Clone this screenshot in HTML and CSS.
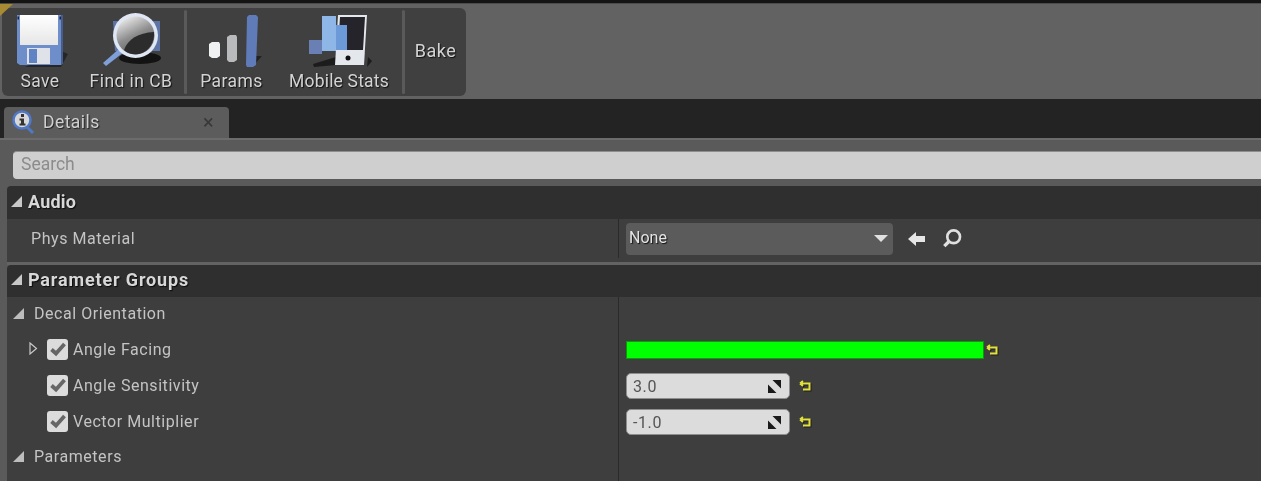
FILE: index.html
```html
<!DOCTYPE html>
<html lang="en">
<head>
  <meta charset="UTF-8">
  <title>Material Instance Details</title>
  <link rel="stylesheet" href="styles.css">
</head>
<body>
  <div class="toolbar-area">
    <span class="corner"></span>
    <div class="toolbar">
      <div class="tool tool-save">
        <svg width="50" height="54" viewBox="0 0 50 54">
          <defs>
            <linearGradient id="saveLabel" x1="0" y1="0" x2="0" y2="1">
              <stop offset="0" stop-color="#ffffff"/>
              <stop offset="1" stop-color="#e6e6e6"/>
            </linearGradient>
          </defs>
          <path d="M46 38l7 3-7 13H10z" fill="#262626"/>
          <path d="M2 2h46v48l-2 2H5l-3-2z" fill="#6d8ecb"/>
          <path d="M46 2h2v48l-2 2z" fill="#465c8a"/>
          <rect x="5" y="2" width="38" height="30" fill="url(#saveLabel)"/>
          <rect x="12" y="35" width="23" height="16" fill="#dfe2e8"/>
          <rect x="14" y="36" width="8" height="14" fill="#5f83c4"/>
          <rect x="2.500" y="3.500" width="1.500" height="3" fill="#223"/>
          <rect x="44.500" y="3.500" width="1.500" height="3" fill="#223"/>
        </svg>
        <span>Save</span>
      </div>
      <div class="tool tool-find">
        <svg width="62" height="56" viewBox="0 0 62 56">
          <defs>
            <linearGradient id="lens" x1="0.200" y1="0" x2="0.700" y2="1">
              <stop offset="0" stop-color="#f0f0f0"/>
              <stop offset="0.500" stop-color="#8d8d8d"/>
              <stop offset="1" stop-color="#555555"/>
            </linearGradient>
          </defs>
          <path d="M13 10h47v30H15z" fill="#5d74a4"/>
          <ellipse cx="40" cy="47" rx="21" ry="6" fill="#131313"/>
          <path d="M3 52l17-15 4 4L6 55z" fill="#7f9fd8"/>
          <circle cx="35.500" cy="24.500" r="22.500" fill="#dfe6f4"/>
          <circle cx="35.500" cy="24.500" r="19" fill="url(#lens)"/>
          <path d="M24 39c4-11 14-17 30-18 1 9-5 20-15 22-6 1-11 0-15-4z" fill="#2c2c2c"/>
        </svg>
        <span>Find in CB</span>
      </div>
      <span class="tool-sep"></span>
      <div class="tool tool-params">
        <svg width="56" height="54" viewBox="0 0 56 54">
          <path d="M50 43h7l-10 11h-5z" fill="#222"/>
          <path d="M4 31l3-2h7l1 2v12l-3 2H7l-3-2z" fill="#eef0f2"/>
          <path d="M22 24l3-2h6l1 2v23l-3 2h-5l-2-2z" fill="#b9babb"/>
          <path d="M42 4l2-2h7l2 2-2 48-3 2h-6l-1-2z" fill="#5f7cb8"/>
        </svg>
        <span>Params</span>
      </div>
      <div class="tool tool-mobile">
        <svg width="62" height="54" viewBox="0 0 62 54">
          <path d="M4 51l23-7v8l-22 2z" fill="#1c1c1c"/>
          <path d="M59 44l4 4-5 6z" fill="#1c1c1c"/>
          <rect y="27" width="13" height="14" fill="#6a80b4"/>
          <rect x="13" y="3" width="14" height="35" fill="#8eb6e6"/>
          <path d="M29 2h29l-3 50H26z" fill="#e4e7ec"/>
          <path d="M31 4h25l-2 33H29z" fill="#24242a"/>
          <rect x="27" y="12" width="11" height="25" fill="#6c9ad8"/>
          <circle cx="39" cy="45" r="2.500" fill="#111"/>
        </svg>
        <span>Mobile Stats</span>
      </div>
      <span class="tool-sep"></span>
      <div class="tool tool-bake"><span>Bake</span></div>
    </div>
  </div>

  <div class="tab-strip">
    <div class="tab">
      <svg class="tab-icon" width="24" height="26" viewBox="0 0 24 26">
        <path d="M15 17l7 7" stroke="#4f78c8" stroke-width="3"/>
        <circle cx="11" cy="11" r="8.500" fill="#d8d8d8" stroke="#4f78c8" stroke-width="2.500"/>
        <rect x="10" y="5" width="3" height="3" fill="#333"/>
        <path d="M8.500 9.500h4.500v5h1.500v2h-6v-2h1.500v-3h-1.500z" fill="#333"/>
      </svg>
      <span class="tab-label">Details</span>
      <span class="tab-close">×</span>
    </div>
  </div>

  <div class="panel">
    <div class="search-wrap">
      <div class="search">Search</div>
    </div>

    <div class="section-head">
      <span class="arrow-down"></span>Audio
    </div>
    <div class="row row-phys">
      <div class="name"><span class="label label-phys">Phys Material</span></div>
      <div class="value">
        <div class="combo">
          <span class="combo-text">None</span>
          <span class="combo-arrow"></span>
        </div>
        <svg class="use-icon" width="20" height="18" viewBox="0 0 20 18">
          <path d="M1 9l8-7v4h9v6H9v4z" fill="#e6e6e6"/>
        </svg>
        <svg class="browse-icon" width="20" height="20" viewBox="0 0 20 20">
          <circle cx="11.500" cy="8" r="5.800" fill="none" stroke="#e0e0e0" stroke-width="2.400"/>
          <path d="M7 12.500l-4 4" stroke="#e0e0e0" stroke-width="3"/>
        </svg>
      </div>
    </div>

    <div class="section-gap"></div>
    <div class="section-head head-params">
      <span class="arrow-down"></span>Parameter Groups
    </div>
    <div class="params">
      <div class="row row-group">
        <div class="name"><span class="arrow-small"></span><span class="label">Decal Orientation</span></div>
        <div class="value"></div>
      </div>
      <div class="row row-param row-facing">
        <div class="name indent">
          <svg class="expander" width="9" height="13" viewBox="0 0 9 13"><path d="M1 1l6.500 5.500L1 12z" fill="none" stroke="#c8c8c8" stroke-width="1.200"/></svg>
          <span class="check"><svg width="20" height="20" viewBox="0 0 20 20"><path d="M3.500 10.500l4.500 4 8.500-9.500" fill="none" stroke="#666" stroke-width="3.800"/></svg></span>
          <span class="label">Angle Facing</span>
        </div>
        <div class="value">
          <div class="color-bar"></div>
          <svg class="reset" width="13" height="12" viewBox="0 0 13 12"><path d="M1 3.500h9.500v6H4M1 3.500l3-2.500M1 3.500l3 2.500" fill="none" stroke="#e2e23c" stroke-width="2"/></svg>
        </div>
      </div>
      <div class="row row-param">
        <div class="name indent">
          <span class="check"><svg width="20" height="20" viewBox="0 0 20 20"><path d="M3.500 10.500l4.500 4 8.500-9.500" fill="none" stroke="#666" stroke-width="3.800"/></svg></span>
          <span class="label">Angle Sensitivity</span>
        </div>
        <div class="value">
          <div class="spin"><span class="spin-text">3.0</span><svg class="spin-grip" width="13" height="13" viewBox="0 0 13 13"><path d="M4.500 0h8.500v8.500zM0 4.500l8.500 8.500H0z" fill="#1a1a1a"/></svg></div>
          <svg class="reset" width="13" height="12" viewBox="0 0 13 12"><path d="M1 3.500h9.500v6H4M1 3.500l3-2.500M1 3.500l3 2.500" fill="none" stroke="#e2e23c" stroke-width="2"/></svg>
        </div>
      </div>
      <div class="row row-param">
        <div class="name indent">
          <span class="check"><svg width="20" height="20" viewBox="0 0 20 20"><path d="M3.500 10.500l4.500 4 8.500-9.500" fill="none" stroke="#666" stroke-width="3.800"/></svg></span>
          <span class="label">Vector Multiplier</span>
        </div>
        <div class="value">
          <div class="spin"><span class="spin-text">-1.0</span><svg class="spin-grip" width="13" height="13" viewBox="0 0 13 13"><path d="M4.500 0h8.500v8.500zM0 4.500l8.500 8.500H0z" fill="#1a1a1a"/></svg></div>
          <svg class="reset" width="13" height="12" viewBox="0 0 13 12"><path d="M1 3.500h9.500v6H4M1 3.500l3-2.500M1 3.500l3 2.500" fill="none" stroke="#e2e23c" stroke-width="2"/></svg>
        </div>
      </div>
      <div class="row row-group row-last">
        <div class="name"><span class="arrow-small"></span><span class="label">Parameters</span></div>
        <div class="value"></div>
      </div>
    </div>
  </div>
</body>
</html>
```

FILE: styles.css
```css
* {
  box-sizing: border-box;
}

html, body {
  height: 100%;
}

body {
  margin: 0;
  overflow: hidden;
  background: #3e3e3e;
  font-family: Roboto, "Liberation Sans", sans-serif;
  font-size: 16px;
  color: #d8d8d8;
  display: flex;
  flex-direction: column;
}

/* the reference is a slightly scaled capture, so everything is a little soft */
.tool svg,
.tool span,
.tab-icon,
.tab-label,
.tab-close,
.search,
.section-head,
.name,
.combo,
.use-icon,
.browse-icon,
.reset,
.spin-text,
.spin-grip {
  filter: blur(.4px);
}

/* Toolbar */
.toolbar-area {
  position: relative;
  height: 99px;
  background: #626262;
  border-top: 3px solid #141414;
  box-shadow: inset 0 1px 0 #4a4a4a;
  padding: 5px 0 0 2px;
}

.toolbar {
  width: 464px;
  height: 88px;
  background: #404040;
  border-radius: 6px;
  display: flex;
  overflow: hidden;
}

.corner {
  position: absolute;
  left: 0;
  top: 1px;
  width: 0;
  height: 0;
  border-top: 12px solid #a88a32;
  border-right: 13px solid transparent;
}

.tool {
  display: flex;
  flex-direction: column;
  align-items: center;
  justify-content: flex-end;
  padding-bottom: 5px;
  color: #d4d4d4;
  font-size: 17.500px;
  letter-spacing: .45px;
  text-shadow: 1px 1px 1px #111;
  white-space: nowrap;
}

.tool svg {
  margin-bottom: 4px;
  overflow: visible;
}

.tool-save { width: 76px; }
.tool-find { width: 106px; }
.tool-params { width: 89px; }
.tool-mobile { width: 126px; letter-spacing: .2px; }

.tool-params svg,
.tool-mobile svg {
  margin-left: 2px;
}

.tool-bake {
  width: 59px;
  justify-content: flex-start;
  padding: 32px 0 0 2px;
  font-size: 18px;
}

.tool-sep {
  width: 3px;
  margin: 2px 0 2px;
  background: #5a5a5a;
  border-radius: 2px;
}

/* Tabs */
.tab-strip {
  height: 39px;
  background: #232323;
  padding: 8px 0 0 4px;
}

.tab {
  width: 225px;
  height: 31px;
  background: #5c5c5c;
  border-radius: 4px 4px 0 0;
  display: flex;
  align-items: center;
  padding: 0 0 2px 7px;
  color: #d0d0d0;
  font-size: 17.500px;
  letter-spacing: .45px;
  text-shadow: 1px 1px 1px #222;
}

.tab-icon {
  margin-right: 8px;
}

.tab-label {
  flex: 1;
}

.tab-close {
  width: 26px;
  color: #383838;
  font-size: 20px;
  text-shadow: none;
}

/* Details panel */
.panel {
  flex: 1;
  background: #5a5a5a;
  padding-left: 7px;
  border-top: 2px solid #6c6c6c;
  display: flex;
  flex-direction: column;
  min-height: 0;
}

.search-wrap {
  height: 46px;
  margin-left: -7px;
  padding: 11px 0 7px 13px;
}

.search {
  height: 28px;
  background: #cfcfcf;
  border-radius: 4px 0 0 4px;
  border-top: 1px solid #8e8e8e;
  color: #8c8c8c;
  font-size: 17.500px;
  line-height: 25px;
  padding-left: 8px;
}

.section-head {
  height: 33px;
  background: #2f2f2f;
  border-radius: 4px 0 0 0;
  display: flex;
  align-items: center;
  padding: 0 0 2px 4px;
  font-weight: 700;
  font-size: 18px;
  letter-spacing: .2px;
  color: #d8d8d8;
  text-shadow: 1px 1px 1px #0c0c0c;
}

.head-params {
  height: 32px;
  padding-bottom: 3px;
  letter-spacing: .85px;
}

.arrow-down {
  width: 0;
  height: 0;
  margin-right: 6px;
  border-bottom: 11px solid #c8c8c8;
  border-left: 11px solid transparent;
}

.section-gap {
  height: 3px;
  background: #636363;
}

.row {
  display: grid;
  grid-template-columns: 612px 1fr;
  background: #3e3e3e;
}

.row-phys {
  height: 43px;
  padding-bottom: 4px;
}

.name {
  display: flex;
  align-items: center;
  border-right: 1px solid #2a2a2a;
  padding-bottom: 2px;
  font-size: 16px;
  letter-spacing: .55px;
  color: #c4c4c4;
}

.row-phys .name {
  padding-bottom: 0;
}

.label-phys {
  padding-left: 24px;
}

.value {
  display: flex;
  align-items: center;
  padding-left: 7px;
}

/* Asset picker */
.combo {
  width: 267px;
  height: 32px;
  background: #5b5b5b;
  border-radius: 4px;
  display: flex;
  align-items: center;
  justify-content: space-between;
  padding: 0 5px 2px 3px;
  font-size: 16px;
  color: #e4e4e4;
  text-shadow: 1px 1px 1px #111;
}

.combo-arrow {
  width: 0;
  height: 0;
  margin-top: 2px;
  border-top: 7px solid #e0e0e0;
  border-left: 7px solid transparent;
  border-right: 7px solid transparent;
}

.use-icon {
  margin-left: 14px;
}

.browse-icon {
  margin-left: 15px;
  transform: scale(1.100);
}

/* Parameter rows */
.params {
  flex: 1;
  background: #3e3e3e;
  display: flex;
  flex-direction: column;
}

.params .row {
  height: 36px;
}

.params .row-group {
  height: 35px;
}

.params .row-last {
  flex: 1;
  height: auto;
}

.row-last .name {
  padding-bottom: 9px;
}

.arrow-small {
  width: 0;
  height: 0;
  margin: 0 10px 0 6px;
  border-bottom: 11px solid #bdbdbd;
  border-left: 11px solid transparent;
}

.indent {
  padding-left: 40px;
  position: relative;
}

.expander {
  position: absolute;
  left: 22px;
  top: 10px;
}

.check {
  width: 21px;
  height: 21px;
  margin-right: 5px;
  background: #dcdcdc;
  border-radius: 3px;
  display: flex;
  align-items: center;
  justify-content: center;
}

.color-bar {
  width: 358px;
  height: 18px;
  background: #00ff00;
  border: 1px solid #0a9a0a;
}

.row-facing .reset {
  margin-left: 2px;
}

.reset {
  margin-left: 9px;
  filter: drop-shadow(1px 1px 0 #1c1c1c);
}

.spin {
  width: 164px;
  height: 26px;
  background: #dcdcdc;
  border: 1px solid #8e8e8e;
  border-radius: 5px;
  display: flex;
  align-items: center;
  justify-content: space-between;
  padding: 0 8px 0 6px;
  color: #555;
  font-size: 16px;
  letter-spacing: .6px;
}
```
